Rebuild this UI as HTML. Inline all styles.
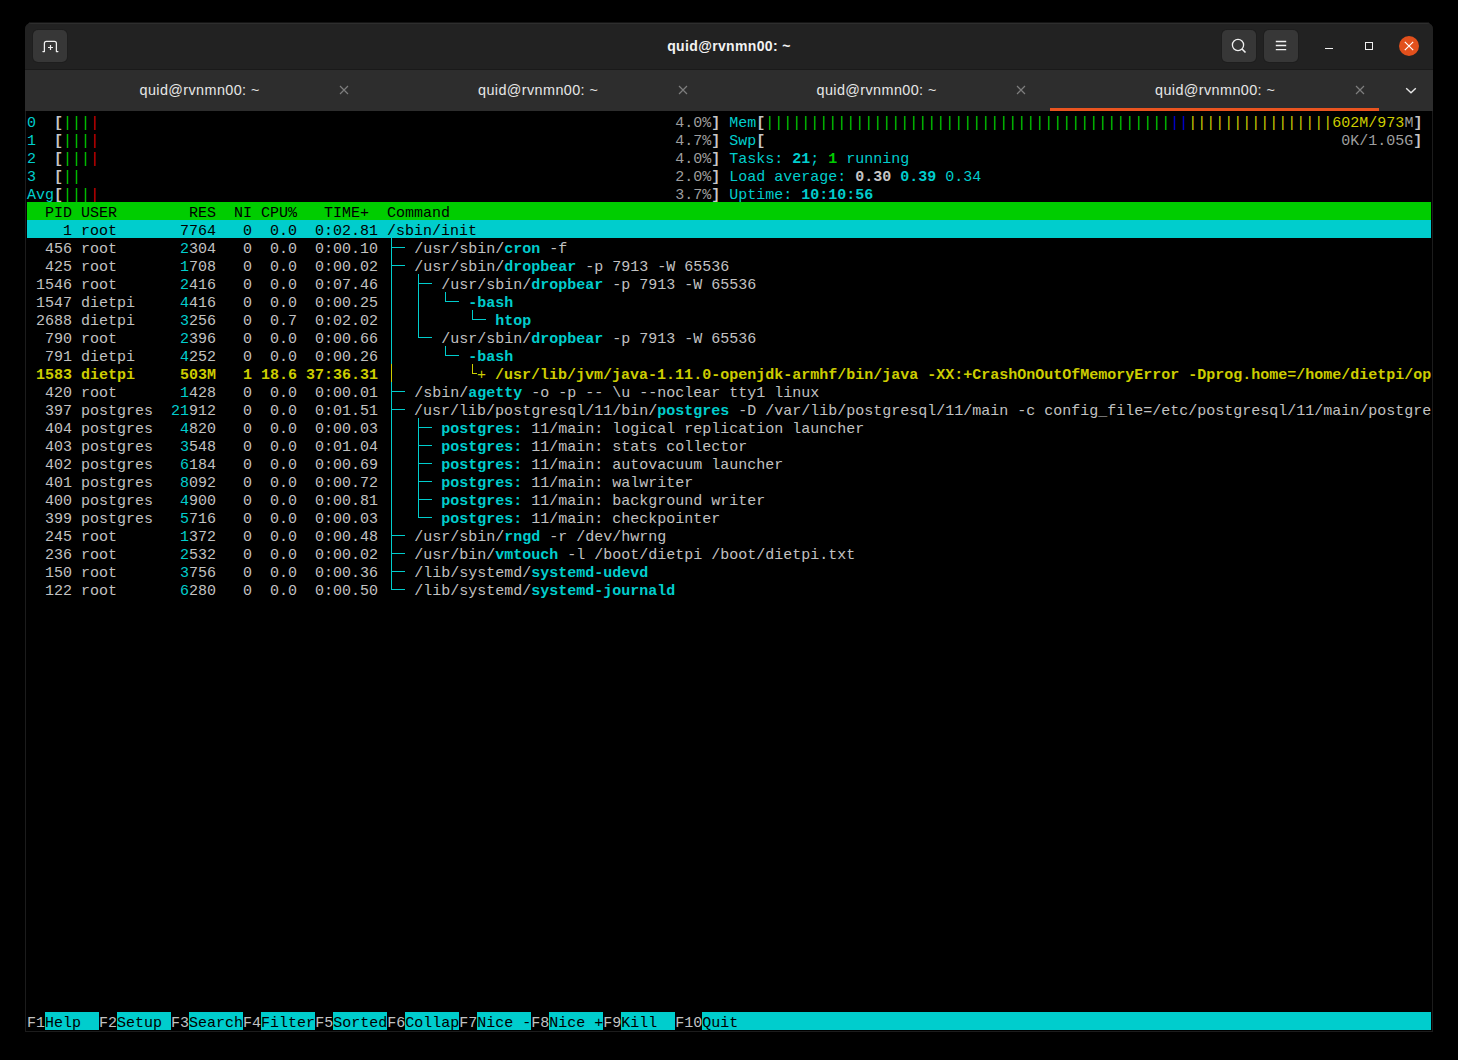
<!DOCTYPE html>
<html><head><meta charset="utf-8">
<style>
html,body{margin:0;padding:0;}
body{width:1458px;height:1060px;background:#000;position:relative;overflow:hidden;font-family:"Liberation Sans",sans-serif;}
#win{position:absolute;left:25px;top:23px;width:1408px;height:1009px;background:#1c1c1c;border-radius:6px 6px 0 0;overflow:hidden;}
#hb{position:absolute;left:0;top:0;width:1408px;height:46px;background:#222222;border-top:1px solid #2e2e2e;box-sizing:border-box;}
#hbl{position:absolute;left:0;top:46px;width:1408px;height:1px;background:#1a1a1a;}
#tb{position:absolute;left:0;top:47px;width:1408px;height:41px;background:#2d2d2d;}
#term{position:absolute;left:1px;top:88px;width:1406px;height:920px;background:#000;}
.btn{position:absolute;top:7px;width:34px;height:32px;border-radius:5px;background:#373737;box-shadow:0 0 0 1px #1e1e1e;}
.title{position:absolute;left:0;width:1408px;top:13px;text-align:center;color:#f2f2f2;font-weight:bold;font-size:14px;letter-spacing:0.35px;line-height:20px;}
.tabt{position:absolute;top:80px;width:200px;text-align:center;color:#e6e6e6;font-size:14.4px;letter-spacing:0.4px;line-height:20px;}
.tabx{position:absolute;}
.abs{position:absolute;}
.row{position:absolute;left:27px;height:18px;line-height:18px;white-space:pre;font-family:"Liberation Mono",monospace;font-size:15px;}
.row span{position:relative;top:3px;}
.bg{position:absolute;height:18px;}
.ln{position:absolute;}
.d{color:#c2c2c2;}
.w{color:#c6c6c6;font-weight:bold;}
.sh{color:#9e9e9e;}
.c{color:#00cdcd;}
.cb{color:#00cdcd;font-weight:bold;}
.g{color:#00cd00;}
.gb{color:#00cd00;font-weight:bold;}
.r{color:#cd0000;}
.y{color:#cdcd00;}
.yb{color:#cdcd00;font-weight:bold;}
.bl{color:#0000d8;}
.k{color:#000000;}
</style></head><body>
<div class="abs" style="left:29px;top:22px;width:1400px;height:1px;background:#141414"></div>
<div id="win">
 <div id="hb"></div>
 <div id="hbl"></div>
 <div id="tb"></div>
 <div id="term"></div>
 <div class="btn" style="left:8px"></div>
 <div class="btn" style="left:1197px"></div>
 <div class="btn" style="left:1239px"></div>
 <div class="title">quid@rvnmn00: ~</div>
</div>
<!-- header icons (page coords) -->
<svg class="abs" style="left:33px;top:30px" width="34" height="32" viewBox="0 0 34 32">
 <path d="M11.4 21.6V13.4Q11.4 11.4 13.4 11.4H21.4Q23.4 11.4 23.4 13.4V21.6M9.9 21.6H11.4M23.4 21.6H24.9" stroke="#f0f0f0" stroke-width="1.25" fill="none" stroke-linecap="round"/>
 <path d="M17.5 15V20M15 17.5H20" stroke="#f0f0f0" stroke-width="1.2" fill="none"/>
</svg>
<svg class="abs" style="left:1222px;top:30px" width="34" height="32" viewBox="0 0 34 32">
 <circle cx="16" cy="15" r="5.6" stroke="#f0f0f0" stroke-width="1.3" fill="none"/>
 <path d="M20 19L23.5 22.5" stroke="#f0f0f0" stroke-width="1.6" fill="none"/>
</svg>
<svg class="abs" style="left:1264px;top:30px" width="34" height="32" viewBox="0 0 34 32">
 <path d="M11.8 11.5H22.2M11.8 15.5H22.2M11.8 19.6H22.2" stroke="#f0f0f0" stroke-width="1.3" fill="none"/>
</svg>
<div class="abs" style="left:1325px;top:47.5px;width:8px;height:1.5px;background:#f0f0f0"></div>
<div class="abs" style="left:1365px;top:42px;width:6px;height:6px;border:1.2px solid #f0f0f0"></div>
<svg class="abs" style="left:1399px;top:36px" width="20" height="20" viewBox="0 0 20 20">
 <circle cx="10" cy="10" r="10" fill="#e2501c"/>
 <path d="M5.8 5.8L14.2 14.2M14.2 5.8L5.8 14.2" stroke="#fff" stroke-width="1.2" fill="none"/>
</svg>
<div class="tabt" style="left:99.6px">quid@rvnmn00: ~</div>
<svg class="tabx" style="left:338.0px;top:84px" width="12" height="12" viewBox="0 0 12 12"><path d="M2 2L10 10M10 2L2 10" stroke="#7e7e7e" stroke-width="1.15" fill="none"/></svg>
<div class="tabt" style="left:438.1px">quid@rvnmn00: ~</div>
<svg class="tabx" style="left:676.5px;top:84px" width="12" height="12" viewBox="0 0 12 12"><path d="M2 2L10 10M10 2L2 10" stroke="#7e7e7e" stroke-width="1.15" fill="none"/></svg>
<div class="tabt" style="left:776.6px">quid@rvnmn00: ~</div>
<svg class="tabx" style="left:1015.0px;top:84px" width="12" height="12" viewBox="0 0 12 12"><path d="M2 2L10 10M10 2L2 10" stroke="#7e7e7e" stroke-width="1.15" fill="none"/></svg>
<div class="tabt" style="left:1115.1px">quid@rvnmn00: ~</div>
<svg class="tabx" style="left:1353.5px;top:84px" width="12" height="12" viewBox="0 0 12 12"><path d="M2 2L10 10M10 2L2 10" stroke="#7e7e7e" stroke-width="1.15" fill="none"/></svg>
<svg class="abs" style="left:1400px;top:82px" width="22" height="16" viewBox="0 0 22 16">
 <path d="M6.2 6.2L11 10.8L15.8 6.2" stroke="#e6e6e6" stroke-width="1.4" fill="none"/>
</svg>
<div class="abs" style="left:1050px;top:108px;width:329px;height:3px;background:#e95420"></div>
<div class="bg" style="left:27.00px;top:202px;width:1404.00px;background:#00cd00"></div>
<div class="bg" style="left:27.00px;top:220px;width:1404.00px;background:#00cdcd"></div>
<div class="bg" style="left:45.00px;top:1012px;width:54.00px;background:#00cdcd"></div>
<div class="bg" style="left:117.00px;top:1012px;width:54.00px;background:#00cdcd"></div>
<div class="bg" style="left:189.00px;top:1012px;width:54.00px;background:#00cdcd"></div>
<div class="bg" style="left:261.00px;top:1012px;width:54.00px;background:#00cdcd"></div>
<div class="bg" style="left:333.00px;top:1012px;width:54.00px;background:#00cdcd"></div>
<div class="bg" style="left:405.00px;top:1012px;width:54.00px;background:#00cdcd"></div>
<div class="bg" style="left:477.00px;top:1012px;width:54.00px;background:#00cdcd"></div>
<div class="bg" style="left:549.00px;top:1012px;width:54.00px;background:#00cdcd"></div>
<div class="bg" style="left:621.00px;top:1012px;width:54.00px;background:#00cdcd"></div>
<div class="bg" style="left:702.00px;top:1012px;width:54.00px;background:#00cdcd"></div>
<div class="bg" style="left:756.00px;top:1012px;width:675.00px;background:#00cdcd"></div>
<div class="row" style="top:112px"><span class="c">0  </span><span class="w">[</span><span class="g">|||</span><span class="r">|</span><span class="d">                                                                </span><span class="sh">4.0%</span><span class="w">]</span><span class="d"> </span><span class="c">Mem</span><span class="w">[</span><span class="g">|||||||||||||||||||||||||||||||||||||||||||||</span><span class="bl">||</span><span class="y">||||||||||||||||</span><span class="y">602M/973</span><span class="sh">M</span><span class="w">]</span></div>
<div class="row" style="top:130px"><span class="c">1  </span><span class="w">[</span><span class="g">|||</span><span class="r">|</span><span class="d">                                                                </span><span class="sh">4.7%</span><span class="w">]</span><span class="d"> </span><span class="c">Swp</span><span class="w">[</span><span class="d">                                                                </span><span class="sh">0K/1.05G</span><span class="w">]</span></div>
<div class="row" style="top:148px"><span class="c">2  </span><span class="w">[</span><span class="g">|||</span><span class="r">|</span><span class="d">                                                                </span><span class="sh">4.0%</span><span class="w">]</span><span class="d"> </span><span class="c">Tasks: </span><span class="cb">21</span><span class="c">; </span><span class="gb">1</span><span class="c"> running</span></div>
<div class="row" style="top:166px"><span class="c">3  </span><span class="w">[</span><span class="g">||</span><span class="r"></span><span class="d">                                                                  </span><span class="sh">2.0%</span><span class="w">]</span><span class="d"> </span><span class="c">Load average: </span><span class="w">0.30 </span><span class="cb">0.39 </span><span class="c">0.34</span></div>
<div class="row" style="top:184px"><span class="c">Avg</span><span class="w">[</span><span class="g">|||</span><span class="r">|</span><span class="d">                                                                </span><span class="sh">3.7%</span><span class="w">]</span><span class="d"> </span><span class="c">Uptime: </span><span class="cb">10:10:56</span></div>
<div class="row" style="top:202px"><span class="k">  PID USER        RES  NI CPU%   TIME+  Command</span></div>
<div class="row" style="top:220px"><span class="k">    1 root       7764   0  0.0  0:02.81 </span><span class="k">/sbin/init</span></div>
<div class="row" style="top:238px"><span class="d">  456 root      </span><span class="d"> </span><span class="c">2</span><span class="d">304</span><span class="d">   0  0.0  0:00.10 </span><span class="c">   </span><span class="d">/usr/sbin/</span><span class="cb">cron</span><span class="d"> -f</span></div>
<div class="row" style="top:256px"><span class="d">  425 root      </span><span class="d"> </span><span class="c">1</span><span class="d">708</span><span class="d">   0  0.0  0:00.02 </span><span class="c">   </span><span class="d">/usr/sbin/</span><span class="cb">dropbear</span><span class="d"> -p 7913 -W 65536</span></div>
<div class="row" style="top:274px"><span class="d"> 1546 root      </span><span class="d"> </span><span class="c">2</span><span class="d">416</span><span class="d">   0  0.0  0:07.46 </span><span class="c">      </span><span class="d">/usr/sbin/</span><span class="cb">dropbear</span><span class="d"> -p 7913 -W 65536</span></div>
<div class="row" style="top:292px"><span class="d"> 1547 dietpi    </span><span class="d"> </span><span class="c">4</span><span class="d">416</span><span class="d">   0  0.0  0:00.25 </span><span class="c">         </span><span class="cb">-bash</span></div>
<div class="row" style="top:310px"><span class="d"> 2688 dietpi    </span><span class="d"> </span><span class="c">3</span><span class="d">256</span><span class="d">   0  0.7  0:02.02 </span><span class="c">            </span><span class="cb">htop</span></div>
<div class="row" style="top:328px"><span class="d">  790 root      </span><span class="d"> </span><span class="c">2</span><span class="d">396</span><span class="d">   0  0.0  0:00.66 </span><span class="c">      </span><span class="d">/usr/sbin/</span><span class="cb">dropbear</span><span class="d"> -p 7913 -W 65536</span></div>
<div class="row" style="top:346px"><span class="d">  791 dietpi    </span><span class="d"> </span><span class="c">4</span><span class="d">252</span><span class="d">   0  0.0  0:00.26 </span><span class="c">         </span><span class="cb">-bash</span></div>
<div class="row" style="top:364px"><span class="yb"> 1583 dietpi     503M   1 18.6 37:36.31 </span><span class="y">          + </span><span class="yb">/usr/lib/jvm/java-1.11.0-openjdk-armhf/bin/java -XX:+CrashOnOutOfMemoryError -Dprog.home=/home/dietpi/op</span></div>
<div class="row" style="top:382px"><span class="d">  420 root      </span><span class="d"> </span><span class="c">1</span><span class="d">428</span><span class="d">   0  0.0  0:00.01 </span><span class="c">   </span><span class="d">/sbin/</span><span class="cb">agetty</span><span class="d"> -o -p -- \u --noclear tty1 linux</span></div>
<div class="row" style="top:400px"><span class="d">  397 postgres  </span><span class="d"></span><span class="c">21</span><span class="d">912</span><span class="d">   0  0.0  0:01.51 </span><span class="c">   </span><span class="d">/usr/lib/postgresql/11/bin/</span><span class="cb">postgres</span><span class="d"> -D /var/lib/postgresql/11/main -c config_file=/etc/postgresql/11/main/postgre</span></div>
<div class="row" style="top:418px"><span class="d">  404 postgres  </span><span class="d"> </span><span class="c">4</span><span class="d">820</span><span class="d">   0  0.0  0:00.03 </span><span class="c">      </span><span class="cb">postgres:</span><span class="d"> 11/main: logical replication launcher</span></div>
<div class="row" style="top:436px"><span class="d">  403 postgres  </span><span class="d"> </span><span class="c">3</span><span class="d">548</span><span class="d">   0  0.0  0:01.04 </span><span class="c">      </span><span class="cb">postgres:</span><span class="d"> 11/main: stats collector</span></div>
<div class="row" style="top:454px"><span class="d">  402 postgres  </span><span class="d"> </span><span class="c">6</span><span class="d">184</span><span class="d">   0  0.0  0:00.69 </span><span class="c">      </span><span class="cb">postgres:</span><span class="d"> 11/main: autovacuum launcher</span></div>
<div class="row" style="top:472px"><span class="d">  401 postgres  </span><span class="d"> </span><span class="c">8</span><span class="d">092</span><span class="d">   0  0.0  0:00.72 </span><span class="c">      </span><span class="cb">postgres:</span><span class="d"> 11/main: walwriter</span></div>
<div class="row" style="top:490px"><span class="d">  400 postgres  </span><span class="d"> </span><span class="c">4</span><span class="d">900</span><span class="d">   0  0.0  0:00.81 </span><span class="c">      </span><span class="cb">postgres:</span><span class="d"> 11/main: background writer</span></div>
<div class="row" style="top:508px"><span class="d">  399 postgres  </span><span class="d"> </span><span class="c">5</span><span class="d">716</span><span class="d">   0  0.0  0:00.03 </span><span class="c">      </span><span class="cb">postgres:</span><span class="d"> 11/main: checkpointer</span></div>
<div class="row" style="top:526px"><span class="d">  245 root      </span><span class="d"> </span><span class="c">1</span><span class="d">372</span><span class="d">   0  0.0  0:00.48 </span><span class="c">   </span><span class="d">/usr/sbin/</span><span class="cb">rngd</span><span class="d"> -r /dev/hwrng</span></div>
<div class="row" style="top:544px"><span class="d">  236 root      </span><span class="d"> </span><span class="c">2</span><span class="d">532</span><span class="d">   0  0.0  0:00.02 </span><span class="c">   </span><span class="d">/usr/bin/</span><span class="cb">vmtouch</span><span class="d"> -l /boot/dietpi /boot/dietpi.txt</span></div>
<div class="row" style="top:562px"><span class="d">  150 root      </span><span class="d"> </span><span class="c">3</span><span class="d">756</span><span class="d">   0  0.0  0:00.36 </span><span class="c">   </span><span class="d">/lib/systemd/</span><span class="cb">systemd-udevd</span></div>
<div class="row" style="top:580px"><span class="d">  122 root      </span><span class="d"> </span><span class="c">6</span><span class="d">280</span><span class="d">   0  0.0  0:00.50 </span><span class="c">   </span><span class="d">/lib/systemd/</span><span class="cb">systemd-journald</span></div>
<div class="row" style="top:1012px"><span class="d">F1</span><span class="k">Help  </span><span class="d">F2</span><span class="k">Setup </span><span class="d">F3</span><span class="k">Search</span><span class="d">F4</span><span class="k">Filter</span><span class="d">F5</span><span class="k">Sorted</span><span class="d">F6</span><span class="k">Collap</span><span class="d">F7</span><span class="k">Nice -</span><span class="d">F8</span><span class="k">Nice +</span><span class="d">F9</span><span class="k">Kill  </span><span class="d">F10</span><span class="k">Quit  </span></div>
<div class="ln" style="left:391px;top:238px;width:1px;height:18px;background:#00cdcd"></div>
<div class="ln" style="left:391px;top:247px;width:5px;height:1px;background:#00cdcd"></div>
<div class="ln" style="left:396px;top:247px;width:9px;height:1px;background:#00cdcd"></div>
<div class="ln" style="left:391px;top:256px;width:1px;height:18px;background:#00cdcd"></div>
<div class="ln" style="left:391px;top:265px;width:5px;height:1px;background:#00cdcd"></div>
<div class="ln" style="left:396px;top:265px;width:9px;height:1px;background:#00cdcd"></div>
<div class="ln" style="left:391px;top:274px;width:1px;height:18px;background:#00cdcd"></div>
<div class="ln" style="left:418px;top:274px;width:1px;height:18px;background:#00cdcd"></div>
<div class="ln" style="left:418px;top:283px;width:5px;height:1px;background:#00cdcd"></div>
<div class="ln" style="left:423px;top:283px;width:9px;height:1px;background:#00cdcd"></div>
<div class="ln" style="left:391px;top:292px;width:1px;height:18px;background:#00cdcd"></div>
<div class="ln" style="left:418px;top:292px;width:1px;height:18px;background:#00cdcd"></div>
<div class="ln" style="left:445px;top:292px;width:1px;height:10px;background:#00cdcd"></div>
<div class="ln" style="left:445px;top:301px;width:5px;height:1px;background:#00cdcd"></div>
<div class="ln" style="left:450px;top:301px;width:9px;height:1px;background:#00cdcd"></div>
<div class="ln" style="left:391px;top:310px;width:1px;height:18px;background:#00cdcd"></div>
<div class="ln" style="left:418px;top:310px;width:1px;height:18px;background:#00cdcd"></div>
<div class="ln" style="left:472px;top:310px;width:1px;height:10px;background:#00cdcd"></div>
<div class="ln" style="left:472px;top:319px;width:5px;height:1px;background:#00cdcd"></div>
<div class="ln" style="left:477px;top:319px;width:9px;height:1px;background:#00cdcd"></div>
<div class="ln" style="left:391px;top:328px;width:1px;height:18px;background:#00cdcd"></div>
<div class="ln" style="left:418px;top:328px;width:1px;height:10px;background:#00cdcd"></div>
<div class="ln" style="left:418px;top:337px;width:5px;height:1px;background:#00cdcd"></div>
<div class="ln" style="left:423px;top:337px;width:9px;height:1px;background:#00cdcd"></div>
<div class="ln" style="left:391px;top:346px;width:1px;height:18px;background:#00cdcd"></div>
<div class="ln" style="left:445px;top:346px;width:1px;height:10px;background:#00cdcd"></div>
<div class="ln" style="left:445px;top:355px;width:5px;height:1px;background:#00cdcd"></div>
<div class="ln" style="left:450px;top:355px;width:9px;height:1px;background:#00cdcd"></div>
<div class="ln" style="left:391px;top:364px;width:1px;height:18px;background:#cdcd00"></div>
<div class="ln" style="left:472px;top:364px;width:1px;height:10px;background:#cdcd00"></div>
<div class="ln" style="left:472px;top:373px;width:5px;height:1px;background:#cdcd00"></div>
<div class="ln" style="left:391px;top:382px;width:1px;height:18px;background:#00cdcd"></div>
<div class="ln" style="left:391px;top:391px;width:5px;height:1px;background:#00cdcd"></div>
<div class="ln" style="left:396px;top:391px;width:9px;height:1px;background:#00cdcd"></div>
<div class="ln" style="left:391px;top:400px;width:1px;height:18px;background:#00cdcd"></div>
<div class="ln" style="left:391px;top:409px;width:5px;height:1px;background:#00cdcd"></div>
<div class="ln" style="left:396px;top:409px;width:9px;height:1px;background:#00cdcd"></div>
<div class="ln" style="left:391px;top:418px;width:1px;height:18px;background:#00cdcd"></div>
<div class="ln" style="left:418px;top:418px;width:1px;height:18px;background:#00cdcd"></div>
<div class="ln" style="left:418px;top:427px;width:5px;height:1px;background:#00cdcd"></div>
<div class="ln" style="left:423px;top:427px;width:9px;height:1px;background:#00cdcd"></div>
<div class="ln" style="left:391px;top:436px;width:1px;height:18px;background:#00cdcd"></div>
<div class="ln" style="left:418px;top:436px;width:1px;height:18px;background:#00cdcd"></div>
<div class="ln" style="left:418px;top:445px;width:5px;height:1px;background:#00cdcd"></div>
<div class="ln" style="left:423px;top:445px;width:9px;height:1px;background:#00cdcd"></div>
<div class="ln" style="left:391px;top:454px;width:1px;height:18px;background:#00cdcd"></div>
<div class="ln" style="left:418px;top:454px;width:1px;height:18px;background:#00cdcd"></div>
<div class="ln" style="left:418px;top:463px;width:5px;height:1px;background:#00cdcd"></div>
<div class="ln" style="left:423px;top:463px;width:9px;height:1px;background:#00cdcd"></div>
<div class="ln" style="left:391px;top:472px;width:1px;height:18px;background:#00cdcd"></div>
<div class="ln" style="left:418px;top:472px;width:1px;height:18px;background:#00cdcd"></div>
<div class="ln" style="left:418px;top:481px;width:5px;height:1px;background:#00cdcd"></div>
<div class="ln" style="left:423px;top:481px;width:9px;height:1px;background:#00cdcd"></div>
<div class="ln" style="left:391px;top:490px;width:1px;height:18px;background:#00cdcd"></div>
<div class="ln" style="left:418px;top:490px;width:1px;height:18px;background:#00cdcd"></div>
<div class="ln" style="left:418px;top:499px;width:5px;height:1px;background:#00cdcd"></div>
<div class="ln" style="left:423px;top:499px;width:9px;height:1px;background:#00cdcd"></div>
<div class="ln" style="left:391px;top:508px;width:1px;height:18px;background:#00cdcd"></div>
<div class="ln" style="left:418px;top:508px;width:1px;height:10px;background:#00cdcd"></div>
<div class="ln" style="left:418px;top:517px;width:5px;height:1px;background:#00cdcd"></div>
<div class="ln" style="left:423px;top:517px;width:9px;height:1px;background:#00cdcd"></div>
<div class="ln" style="left:391px;top:526px;width:1px;height:18px;background:#00cdcd"></div>
<div class="ln" style="left:391px;top:535px;width:5px;height:1px;background:#00cdcd"></div>
<div class="ln" style="left:396px;top:535px;width:9px;height:1px;background:#00cdcd"></div>
<div class="ln" style="left:391px;top:544px;width:1px;height:18px;background:#00cdcd"></div>
<div class="ln" style="left:391px;top:553px;width:5px;height:1px;background:#00cdcd"></div>
<div class="ln" style="left:396px;top:553px;width:9px;height:1px;background:#00cdcd"></div>
<div class="ln" style="left:391px;top:562px;width:1px;height:18px;background:#00cdcd"></div>
<div class="ln" style="left:391px;top:571px;width:5px;height:1px;background:#00cdcd"></div>
<div class="ln" style="left:396px;top:571px;width:9px;height:1px;background:#00cdcd"></div>
<div class="ln" style="left:391px;top:580px;width:1px;height:10px;background:#00cdcd"></div>
<div class="ln" style="left:391px;top:589px;width:5px;height:1px;background:#00cdcd"></div>
<div class="ln" style="left:396px;top:589px;width:9px;height:1px;background:#00cdcd"></div>
</body></html>
